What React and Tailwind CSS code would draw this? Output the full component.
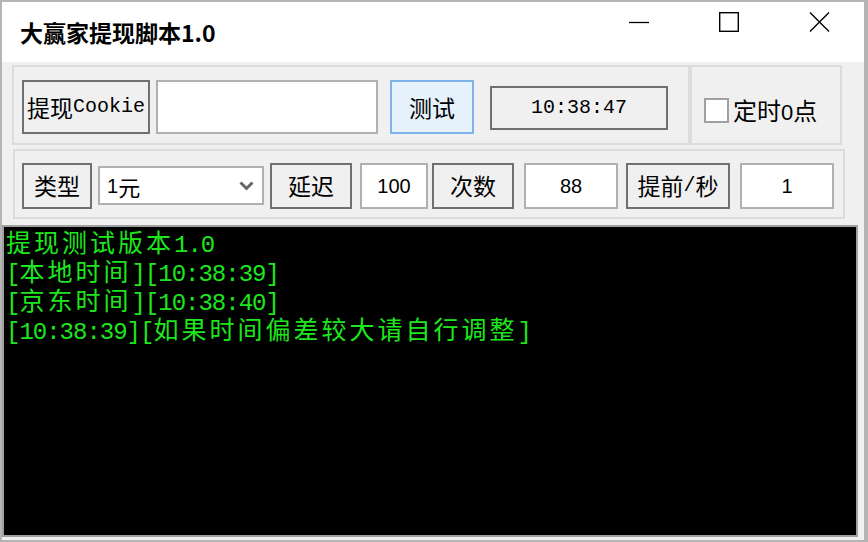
import React from "react";

const CJK = /([\u4e00-\u9fff]+)/;

// splits a string into CJK / latin runs so each can get its own font
const Mixed = ({ text, cjk, latin }) =>
  text
    .split(CJK)
    .filter(Boolean)
    .map((s, i) =>
      CJK.test(s) ? (
        <span key={i} className={cjk}>
          {s}
        </span>
      ) : (
        <span key={i} className={latin}>
          {s}
        </span>
      )
    );

const uiCjk = "text-[23px] font-['Noto_Sans_CJK_SC',sans-serif]";
const uiMono = "text-[20px] font-['Liberation_Mono',monospace]";
const conCjk =
  "inline-block h-[28px] text-[25px] tracking-[3px] leading-[28px] font-['Noto_Sans_CJK_SC',sans-serif]";
const conMono =
  "inline-block h-[28px] text-[24px] tracking-[-1px] leading-[28px] font-['Liberation_Mono',monospace]";

const Btn = ({ text, className }) => (
  <div
    className={`flex items-center justify-center border-2 border-[#707070] bg-[#f0f0f0] text-black leading-none ${className}`}
  >
    <Mixed text={text} cjk={uiCjk} latin={uiMono} />
  </div>
);

const Field = ({ value, className }) => (
  <div
    className={`flex items-center justify-center border-2 border-[#b0b0b0] bg-white text-[20px] leading-none text-black font-['Liberation_Sans',sans-serif] ${className}`}
  >
    {value}
  </div>
);

const lines = [
  "提现测试版本1.0",
  "[本地时间][10:38:39]",
  "[京东时间][10:38:40]",
  "[10:38:39][如果时间偏差较大请自行调整]",
];

export default function App() {
  return (
    <div className="w-[868px] h-[542px] flex flex-col overflow-hidden bg-[#f0f0f0] border-2 border-r-4 border-[#b4b4b4]">
      {/* title bar */}
      <div className="h-[60px] shrink-0 bg-white flex items-center">
        <div className="pl-[18px] text-[23px] font-bold text-black font-['Noto_Sans_CJK_SC',sans-serif] leading-none">
          大赢家提现脚本1.0
        </div>
        <div className="ml-auto self-start h-[40px] flex items-center">
          <div className="w-[90px] h-full flex items-center justify-center">
            <svg width="20" height="20" viewBox="0 0 20 20">
              <path d="M0 10.5h20" stroke="#000" strokeWidth="1.3" />
            </svg>
          </div>
          <div className="w-[90px] h-full flex items-center justify-center">
            <svg width="20" height="20" viewBox="0 0 20 20">
              <rect x="0.7" y="0.7" width="18.6" height="18.6" fill="none" stroke="#000" strokeWidth="1.4" />
            </svg>
          </div>
          <div className="w-[90px] h-full flex items-center justify-center">
            <svg width="21" height="20" viewBox="0 0 21 20">
              <path d="M1 0.5l19 19M20 0.5l-19 19" stroke="#000" strokeWidth="1.4" />
            </svg>
          </div>
        </div>
      </div>

      {/* client area */}
      <div className="flex-1 flex flex-col pt-[3px]">
        <div className="flex ml-[10px]">
          <div className="w-[678px] h-[80px] border-2 border-[#dcdcdc] flex items-start pt-[13px] pl-[8px]">
            <Btn text="提现Cookie" className="w-[128px] h-[54px]" />
            <div className="ml-[6px] w-[222px] h-[54px] border-2 border-[#b0b0b0] bg-white" />
            <div className="ml-[12px] w-[84px] h-[54px] border-2 border-[#7eb4ea] bg-[#e5f1fb] flex items-center justify-center leading-none">
              <span className={uiCjk}>测试</span>
            </div>
            <div className="ml-[16px] mt-[6px] w-[178px] h-[44px] border-2 border-[#707070] bg-[#f0f0f0] flex items-center justify-center leading-none">
              <span className={uiMono}>10:38:47</span>
            </div>
          </div>
          <div className="w-[152px] h-[80px] border-2 border-[#dcdcdc] flex items-center pl-[12px] pt-[11px]">
            <div className="w-[25px] h-[25px] border-2 border-[#a0a0a0] bg-white" />
            <div className="ml-[4px] leading-none text-black">
              <span className="text-[24px] font-['Noto_Sans_CJK_SC',sans-serif]">定时</span>
              <span className="text-[22px] font-['Liberation_Sans',sans-serif]">0</span>
              <span className="text-[24px] font-['Noto_Sans_CJK_SC',sans-serif]">点</span>
            </div>
          </div>
        </div>

        <div className="mt-[4px] ml-[11px] w-[832px] h-[70px] border-2 border-[#dcdcdc] flex items-center pl-[7px] pt-[3px]">
          <Btn text="类型" className="w-[70px] h-[46px]" />
          <div className="ml-[6px] w-[166px] h-[39px] border-2 border-[#b0b0b0] bg-white flex items-center pl-[7px] pr-[8px] leading-none">
            <span className="text-[20px] font-['Liberation_Sans',sans-serif]">1</span>
            <span className="text-[22px] font-['Noto_Sans_CJK_SC',sans-serif]">元</span>
            <svg className="ml-auto" width="15" height="10" viewBox="0 0 15 10">
              <path d="M1.5 1.5l6 6 6-6" fill="none" stroke="#666" strokeWidth="3" />
            </svg>
          </div>
          <Btn text="延迟" className="ml-[6px] w-[82px] h-[46px]" />
          <Field value="100" className="ml-[8px] w-[68px] h-[46px]" />
          <Btn text="次数" className="ml-[4px] w-[82px] h-[46px]" />
          <Field value="88" className="ml-[10px] w-[94px] h-[46px]" />
          <Btn text="提前/秒" className="ml-[8px] w-[104px] h-[46px]" />
          <Field value="1" className="ml-[10px] w-[94px] h-[46px]" />
        </div>

        {/* log console */}
        <div className="mt-[6px] w-[856px] h-[312px] border-2 border-[#a0a0a0] bg-black text-[#1ee61e] pl-[2px]">
          {lines.map((l, i) => (
            <div key={i} className="h-[29px] leading-[28px] whitespace-nowrap">
              <Mixed text={l} cjk={conCjk} latin={conMono} />
            </div>
          ))}
        </div>
      </div>
    </div>
  );
}
